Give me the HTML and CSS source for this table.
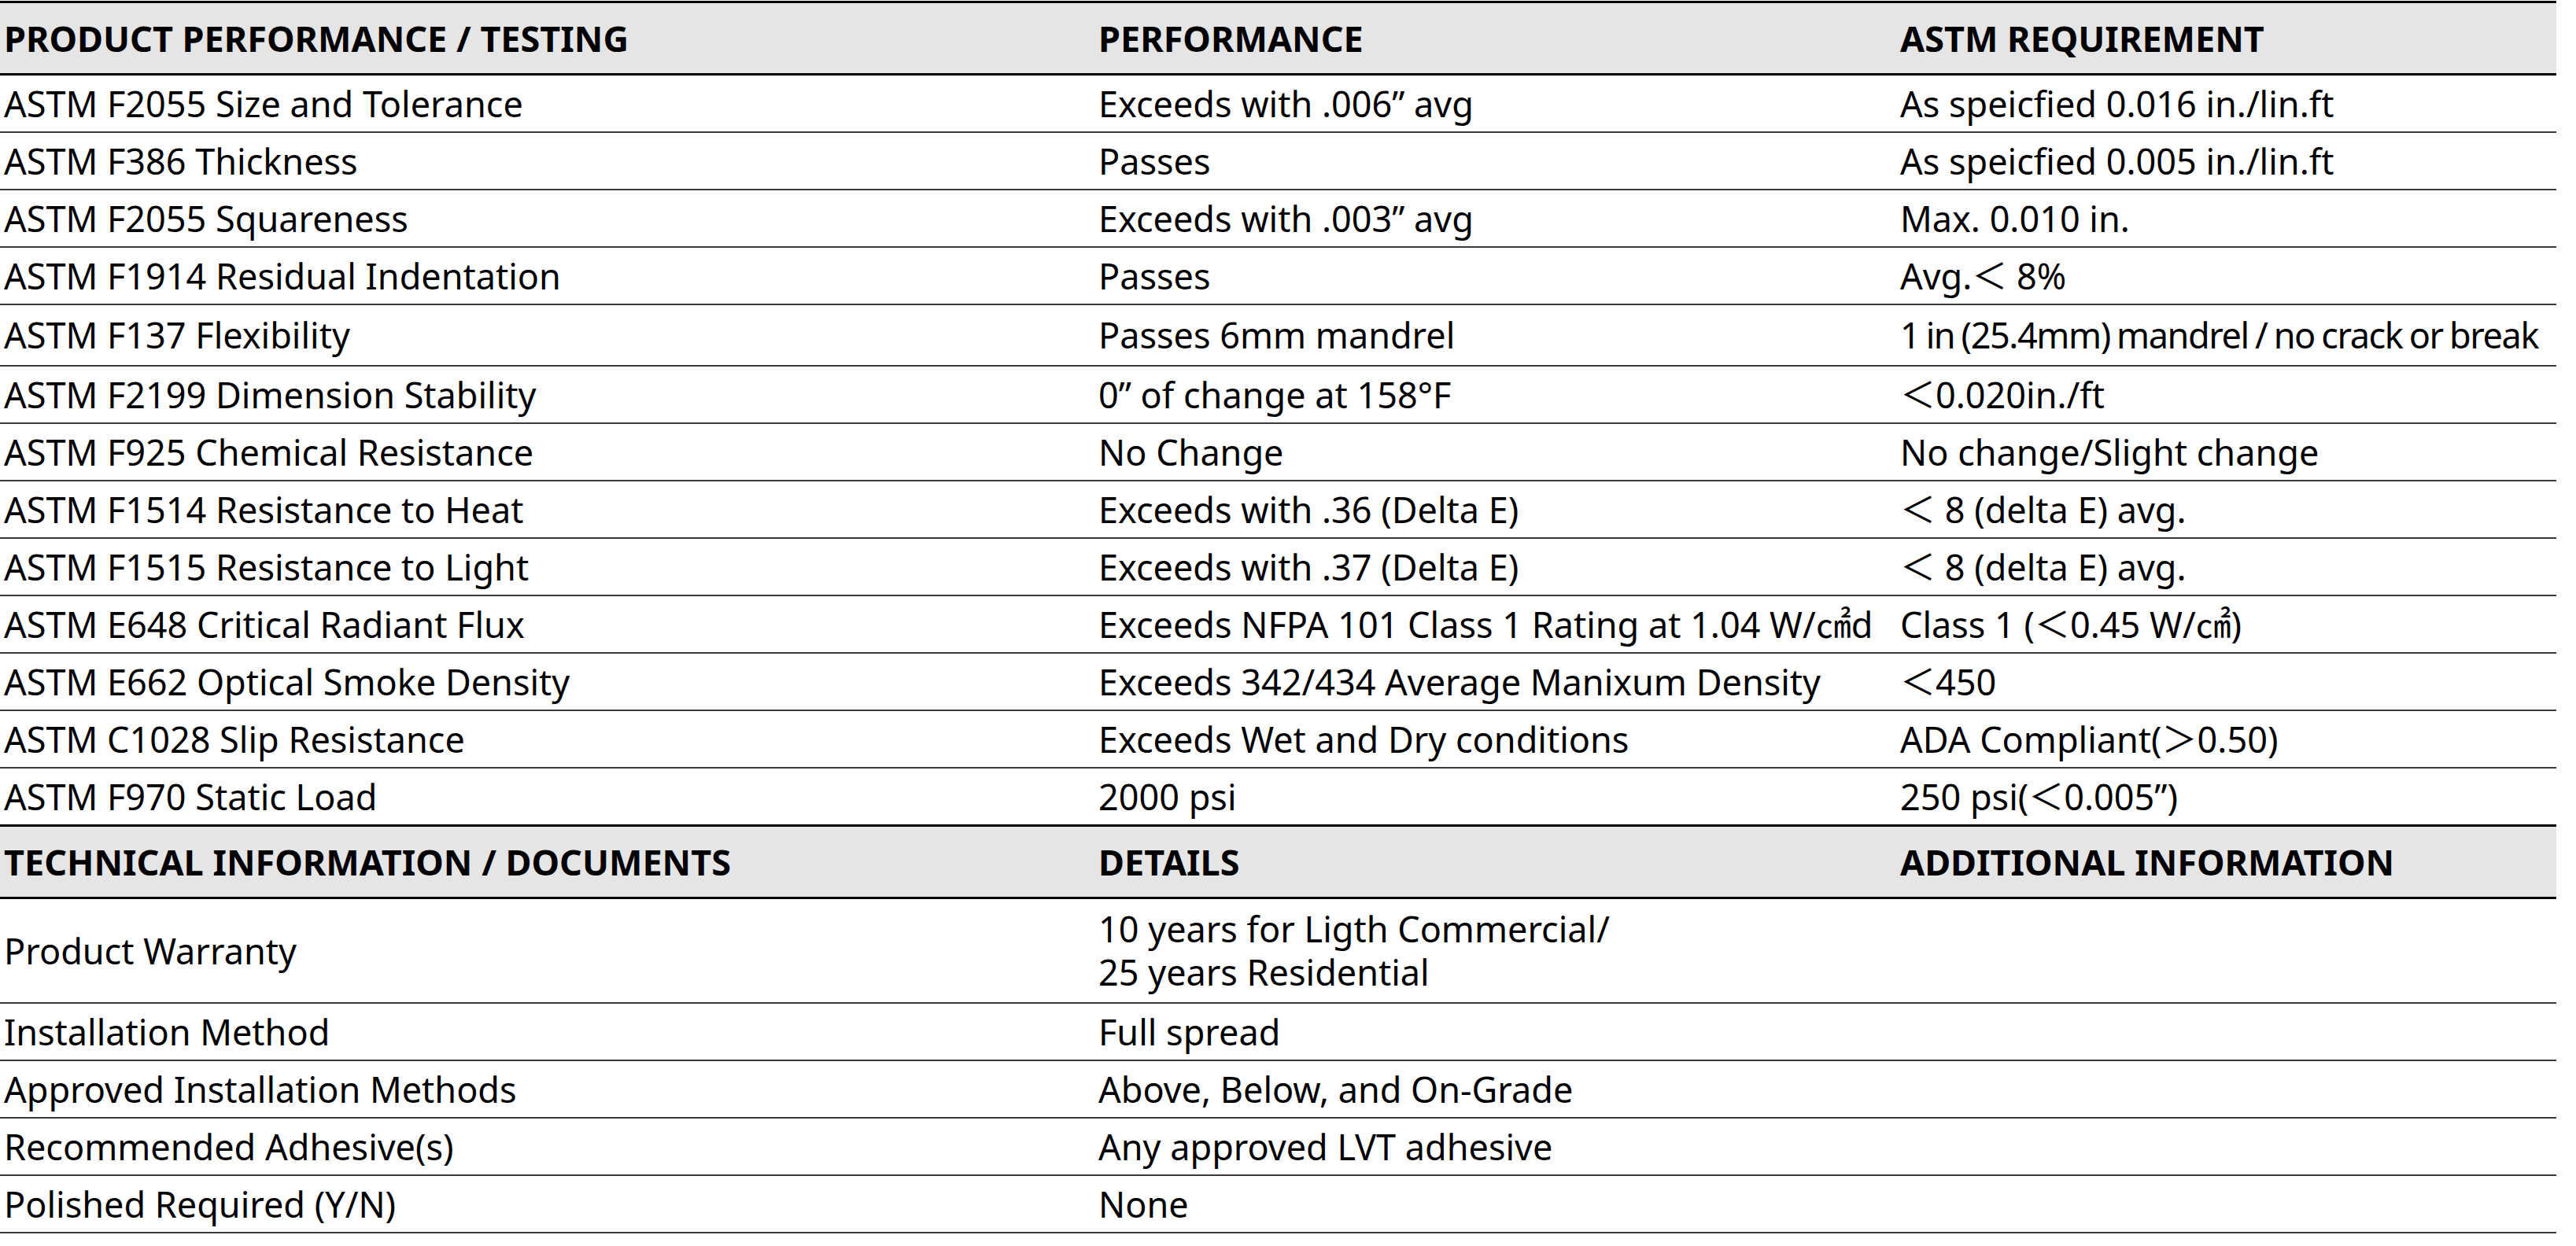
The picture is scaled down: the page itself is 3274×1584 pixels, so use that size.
FILE: index.html
```html
<!DOCTYPE html>
<html lang="en">
<head>
<meta charset="utf-8">
<title>Product Performance</title>
<link rel="stylesheet" href="styles.css">
</head>
<body>
<table class="spec">
  <colgroup>
    <col class="c1"><col class="c2"><col class="c3">
  </colgroup>
  <tbody>
    <tr class="head">
      <th>PRODUCT PERFORMANCE / TESTING</th><th>PERFORMANCE</th><th>ASTM REQUIREMENT</th>
    </tr>
    <tr><td>ASTM F2055 Size and Tolerance</td><td>Exceeds with .006” avg</td><td>As speicfied 0.016 in./lin.ft</td></tr>
    <tr><td>ASTM F386 Thickness</td><td>Passes</td><td>As speicfied 0.005 in./lin.ft</td></tr>
    <tr><td>ASTM F2055 Squareness</td><td>Exceeds with .003” avg</td><td>Max. 0.010 in.</td></tr>
    <tr><td>ASTM F1914 Residual Indentation</td><td>Passes</td><td>Avg.＜ 8%</td></tr>
    <tr class="tall"><td>ASTM F137 Flexibility</td><td>Passes 6mm mandrel</td><td class="tight">1 in (25.4mm) mandrel / no crack or break</td></tr>
    <tr><td>ASTM F2199 Dimension Stability</td><td>0” of change at 158°F</td><td>＜0.020in./ft</td></tr>
    <tr><td>ASTM F925 Chemical Resistance</td><td>No Change</td><td>No change/Slight change</td></tr>
    <tr><td>ASTM F1514 Resistance to Heat</td><td>Exceeds with .36 (Delta E)</td><td>＜ 8 (delta E) avg.</td></tr>
    <tr><td>ASTM F1515 Resistance to Light</td><td>Exceeds with .37 (Delta E)</td><td>＜ 8 (delta E) avg.</td></tr>
    <tr><td>ASTM E648 Critical Radiant Flux</td><td>Exceeds NFPA 101 Class 1 Rating at 1.04 W/㎠d</td><td>Class 1 (＜0.45 W/㎠)</td></tr>
    <tr><td>ASTM E662 Optical Smoke Density</td><td>Exceeds 342/434 Average Manixum Density</td><td>＜450</td></tr>
    <tr><td>ASTM C1028 Slip Resistance</td><td>Exceeds Wet and Dry conditions</td><td>ADA Compliant(＞0.50)</td></tr>
    <tr class="last"><td>ASTM F970 Static Load</td><td>2000 psi</td><td>250 psi(＜0.005”)</td></tr>
    <tr class="head">
      <th>TECHNICAL INFORMATION / DOCUMENTS</th><th>DETAILS</th><th>ADDITIONAL INFORMATION</th>
    </tr>
    <tr class="double"><td>Product Warranty</td><td>10 years for Ligth Commercial/<br>25 years Residential</td><td></td></tr>
    <tr><td>Installation Method</td><td>Full spread</td><td></td></tr>
    <tr><td>Approved Installation Methods</td><td>Above, Below, and On-Grade</td><td></td></tr>
    <tr><td>Recommended Adhesive(s)</td><td>Any approved LVT adhesive</td><td></td></tr>
    <tr><td>Polished Required (Y/N)</td><td>None</td><td></td></tr>
  </tbody>
</table>
</body>
</html>
```

FILE: styles.css
```css
html, body {
  margin: 0;
  padding: 0;
  background: #ffffff;
}

body {
  padding-top: 1px;
  font-family: "Noto Sans", "Noto Sans CJK KR", "Noto Sans CJK JP", sans-serif;
  color: #000000;
}

.spec {
  width: 3249px;
  table-layout: fixed;
  border-collapse: collapse;
  font-size: 45px;
  line-height: 55px;
}

.spec .c1 { width: 1391px; }
.spec .c2 { width: 1019px; }
.spec .c3 { width: 839px; }

.spec th,
.spec td {
  text-align: left;
  vertical-align: middle;
  white-space: nowrap;
  padding: 8px 5px;
}

.spec td {
  border-bottom: 2px solid #3a3a3a;
  font-weight: 400;
}

.spec .head th {
  background: #e5e5e5;
  font-weight: 700;
  border-top: 3px solid #000000;
  border-bottom: 3px solid #000000;
  padding-top: 17px;
  padding-bottom: 17px;
}

.spec .tall td {
  padding-top: 10px;
  padding-bottom: 11px;
}

.spec .double td {
  padding-top: 10px;
  padding-bottom: 11px;
}

.spec .tight {
  letter-spacing: -1.4px;
  word-spacing: -2px;
}
```
